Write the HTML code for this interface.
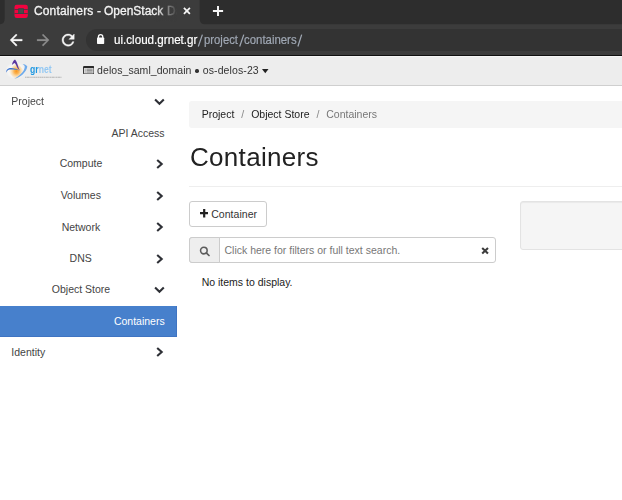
<!DOCTYPE html>
<html>
<head>
<meta charset="utf-8">
<title>Containers - OpenStack Dashboard</title>
<style>
html,body{margin:0;padding:0;}
body{width:622px;height:500px;overflow:hidden;background:#fff;font-family:"Liberation Sans",sans-serif;position:relative;color:#333;}
.abs{position:absolute;}
/* browser chrome */
#toolbar{left:0;top:24px;width:622px;height:31px;background:#3c3c3c;}
#tbline{left:0;top:55px;width:622px;height:1px;background:#101010;}
#omni{left:86px;top:28.500px;width:560px;height:22.500px;border-radius:12px;background:#333;}
.t{position:absolute;white-space:nowrap;line-height:1;}
.u{top:33.600px;font-size:12.600px;transform-origin:0 50%;}
.tt{will-change:transform;top:5px;font-size:12px;color:#f4f4f4;-webkit-text-stroke:.3px #f4f4f4;}
/* page */
#topbar{left:0;top:56px;width:622px;height:29px;background:#ededed;border-bottom:1px solid #cfcfcf;}
#sidebar{left:0;top:86px;width:177px;height:414px;background:#fff;}
.nav{font-size:10.5px;color:#444;}
.ch{position:absolute;}
#active{left:0;top:306px;width:176px;height:30px;background:#4780cc;border-right:1px solid #3f74c2;border-bottom:1px solid #3f74c2;}
#crumb{left:189px;top:101px;width:440px;height:27px;background:#f5f5f5;border-radius:3px;}
#hr{left:189px;top:186px;width:440px;height:1px;background:#eee;}
#btn{left:189px;top:201px;width:76px;height:24px;border:1px solid #ccc;border-radius:3px;background:#fff;}
#well{left:520px;top:201px;width:120px;height:46.600px;box-shadow:inset 0 1px 1px rgba(0,0,0,.05);border:1px solid #e3e3e3;border-radius:3px;background:#f5f5f5;}
#search{left:189px;top:237px;width:304.500px;height:24px;border:1px solid #ccc;border-radius:3px;background:#fff;}
#addon{left:189px;top:237px;width:29px;height:24px;border:1px solid #ccc;border-radius:3px 0 0 3px;background:#eee;}
</style>
</head>
<body>

<!-- browser chrome -->
<div id="toolbar" class="abs"></div>
<svg class="abs" style="left:0;top:0" width="622" height="26" viewBox="0 0 622 26"><rect x="0" y="0" width="622" height="26" fill="#3c3c3c"/><path d="M0 0 H4.700 V18.800 Q4.700 24.300 -0.700 24.300 H0 Z" fill="#2d2d2d"/><path d="M199.700 0 V18.800 Q199.700 24.300 205.100 24.300 H622 V0 Z" fill="#2d2d2d"/></svg>
<div id="tbline" class="abs"></div>
<div id="omni" class="abs"></div>
<!-- favicon -->
<svg class="abs" style="left:13px;top:3px" width="17" height="17" viewBox="0 0 17 17">
<rect x="1.100" y="1.400" width="14.100" height="14" rx="2.600" fill="#2c4a48" opacity=".75"/>
<rect x="1.500" y="1.800" width="13.300" height="13.200" rx="2.200" fill="#f3033f"/>
<rect x="1.500" y="6.100" width="13.300" height=".75" fill="#3a3a40"/>
<rect x="1.500" y="10.150" width="13.300" height=".75" fill="#3a3a40"/>
<rect x="5.200" y="5.300" width="5.700" height="5.700" rx=".3" fill="#2c4a48"/>
<rect x="6.100" y="6.200" width="3.900" height="3.900" fill="#4b4b4b"/>
</svg>
<div class="t tt" style="left:34.200px;letter-spacing:.14px;">Containers</div>
<div class="t tt" style="left:97.3px;">-</div>
<div class="t tt" style="left:103.7px;">OpenStack</div>
<div class="t tt" style="left:166.500px;width:11.500px;overflow:hidden;">Da</div>
<div class="abs" style="left:154px;top:2px;width:25px;height:20px;background:linear-gradient(90deg,rgba(60,60,60,0),rgba(60,60,60,.13) 24%,rgba(60,60,60,.57) 54%,rgba(60,60,60,.82) 78%,#3c3c3c 92%);"></div>
<svg class="abs" style="left:181.750px;top:6.350px" width="10" height="10" viewBox="0 0 10 10"><path d="M1.900 1.900 L7.900 7.900 M7.900 1.900 L1.900 7.900" stroke="#f6f6f6" stroke-width="1.750" fill="none"/></svg>
<svg class="abs" style="left:212px;top:5.300px" width="12" height="12" viewBox="0 0 12 12"><path d="M6 0.900 V11.100 M0.900 6 H11.100" stroke="#f6f6f6" stroke-width="1.950" fill="none"/></svg>
<!-- nav buttons -->
<svg class="abs" style="left:6.930px;top:30.600px" width="18.240" height="18.240" viewBox="0 0 24 24"><path d="M20 11H7.830l5.590-5.590L12 4l-8 8 8 8 1.410-1.410L7.830 13H20v-2z" fill="#f6f6f6" stroke="#f6f6f6" stroke-width=".5"/></svg>
<svg class="abs" style="left:33.700px;top:30.600px" width="18.240" height="18.240" viewBox="0 0 24 24"><path d="M12 4l-1.410 1.410L16.170 11H4v2h12.170l-5.580 5.590L12 20l8-8z" fill="#8c8c8c" stroke="#8c8c8c" stroke-width=".3"/></svg>
<svg class="abs" style="left:59.080px;top:30.880px" width="18.240" height="18.240" viewBox="0 0 24 24"><path d="M17.650 6.350C16.200 4.900 14.210 4 12 4c-4.420 0-7.990 3.580-7.990 8s3.570 8 7.990 8c3.730 0 6.840-2.550 7.730-6h-2.080c-.82 2.330-3.040 4-5.650 4-3.310 0-6-2.690-6-6s2.690-6 6-6c1.660 0 3.140.69 4.220 1.780L13 11h7V4l-2.350 2.350z" fill="#f6f6f6" stroke="#f6f6f6" stroke-width=".5"/></svg>
<!-- lock -->
<svg class="abs" style="left:96px;top:33px" width="10" height="12" viewBox="0 0 10 12"><rect x="1" y="4.500" width="7.200" height="6.500" rx="0.700" fill="#fbfbfb"/><path d="M2.450 5 V3.800 A2.150 2.150 0 0 1 6.750 3.800 V5" stroke="#fbfbfb" stroke-width="1.300" fill="none"/></svg>
<div class="t u" id="url" style="left:114px;color:#fff;-webkit-text-stroke:.2px #fff;transform:scaleX(0.9235);">ui.cloud.grnet.gr</div>
<div class="t u" style="left:203.800px;color:#9fa7b3;-webkit-text-stroke:.2px #9fa7b3;transform:scaleX(0.8992);">project</div>
<div class="t u" style="left:244.100px;color:#9fa7b3;-webkit-text-stroke:.2px #9fa7b3;transform:scaleX(0.9052);">containers</div>
<svg class="abs" style="left:196px;top:33px" width="110" height="15" viewBox="0 0 110 15"><path d="M2.300 13.500 L6.400 1.600 M43.700 13.500 L47.800 1.600 M101.900 13.500 L105.700 1.600" stroke="#9fa7b3" stroke-width="1.250" fill="none"/></svg>

<!-- page -->
<div id="topbar" class="abs"></div>
<div class="abs" style="left:0;top:56px;width:622px;height:1px;background:#f6f6f6;"></div>
<!-- logo -->
<svg class="abs" style="left:0;top:56px" width="70" height="29" viewBox="0 0 70 29">
<defs><radialGradient id="og" cx="50%" cy="50%" r="50%"><stop offset="0" stop-color="#f8941d"/><stop offset="0.28" stop-color="#faa635" stop-opacity=".85"/><stop offset="0.65" stop-color="#fdc97a" stop-opacity=".4"/><stop offset="1" stop-color="#ffffff" stop-opacity="0"/></radialGradient>
<radialGradient id="wg" cx="50%" cy="50%" r="50%"><stop offset="0" stop-color="#fff" stop-opacity=".9"/><stop offset="0.7" stop-color="#fff" stop-opacity=".5"/><stop offset="1" stop-color="#fff" stop-opacity="0"/></radialGradient></defs>
<ellipse cx="15.500" cy="14.500" rx="10.500" ry="9" fill="url(#wg)"/>
<path d="M16.500 7.400 L23.600 15.200 L16 23 L9.200 15.600 Z" fill="url(#og)" transform="translate(16.500 15.400) scale(1.180) translate(-16.500 -15.400)"/>
<path d="M11.900 9 C12.400 6.300 13.600 4.300 15 3.600 C16.400 5 17.300 7.500 17.900 9.500 C18.300 11 19 12.800 19.800 14.400 C18 13 17 11.500 16.400 9.800 C15.900 8.600 15.400 7.600 14.800 6.900 C13.800 7.200 12.800 7.900 11.900 9 Z" fill="#5a36a0"/>
<path d="M6.200 16.800 C5.900 14.500 7 13 9 12.300 C12 11.500 16 12.500 19.800 14.400 C16 13.800 12.500 13.300 10 13.600 C8 13.900 6.800 14.900 6.200 16.800 Z" fill="#3b74d0"/>
<path d="M22.700 8 C24.600 8.200 26.300 9.100 27.300 10.600 C26.800 13.600 25.200 16.200 22.700 18.500 C20.200 20.700 17 22.200 14.300 22.800 C17.300 21 20 19 22.200 16.500 C24.300 14 24.900 11.700 24.700 10 C24.200 9.200 23.600 8.500 22.700 8 Z" fill="#6eaaec"/>
<text x="30" y="16.800" font-family="Liberation Sans, sans-serif" font-size="11.600" font-weight="bold" fill="#1f98e2" textLength="21.600" lengthAdjust="spacingAndGlyphs">gr<tspan fill="#93c8f3">net</tspan></text>
<path d="M25 21.300 H61.500" stroke="#b4b4b4" stroke-width="1.100" stroke-dasharray="1.600 .400 2.300 .300 1.200 .400"/>
</svg>
<!-- context picker -->
<svg class="abs" style="left:82.700px;top:65.700px" width="11.400" height="8.200" viewBox="0 0 11.400 8.200"><rect x="0" y="0" width="11.400" height="8.200" rx="1.200" fill="#2a2a2a"/><rect x="0.900" y="1.900" width="9.600" height="5.500" rx=".3" fill="#dedede"/><path d="M3.600 3.200 H9.600 M3.600 4.650 H9.600 M3.600 6.100 H9.600" stroke="#777" stroke-width=".8"/><path d="M1.800 3.200 H2.800 M1.800 4.650 H2.800 M1.800 6.100 H2.800" stroke="#999" stroke-width=".8"/></svg>
<div class="t" id="ctx" style="left:97.100px;top:64.900px;font-size:10.500px;color:#333;letter-spacing:.06px;">delos_saml_domain</div>
<div class="abs" style="left:195.300px;top:69.300px;width:3.300px;height:3.300px;border-radius:50%;background:#333;"></div>
<div class="t" id="ctx2" style="left:202.800px;top:64.900px;font-size:10.500px;color:#333;letter-spacing:.1px;">os-delos-23</div>
<svg class="abs" style="left:262px;top:69px" width="7" height="5" viewBox="0 0 7 5"><path d="M0 0 H6.500 L3.250 4.200 Z" fill="#222"/></svg>

<div id="sidebar" class="abs"></div>
<div id="active" class="abs"></div>
<div class="t nav" style="left:11.3px;top:96px;">Project</div>
<div class="t nav" style="right:457.400px;top:128px;">API Access</div>
<div class="t nav" style="left:59.700px;top:158px;">Compute</div>
<div class="t nav" style="left:60.700px;top:189.900px;">Volumes</div>
<div class="t nav" style="left:61.700px;top:222px;">Network</div>
<div class="t nav" style="left:69.600px;top:252.900px;">DNS</div>
<div class="t nav" style="left:51.800px;top:284.200px;">Object Store</div>
<div class="t nav" style="right:457.300px;top:316.300px;color:#fff;">Containers</div>
<div class="t nav" style="left:11.300px;top:347.300px;">Identity</div>
<svg class="ch" style="left:153.700px;top:98px" width="11" height="8" viewBox="0 0 11 8"><path d="M1.100 1.500 L5.450 5.750 L9.800 1.500" stroke="#2e3036" stroke-width="2.100" fill="none" stroke-linejoin="miter"/></svg>
<svg class="ch" style="left:155.850px;top:158.700px" width="8" height="10" viewBox="0 0 8 10"><path d="M1.200 1 L5.700 5 L1.200 9" stroke="#2e3036" stroke-width="2.100" fill="none" stroke-linejoin="miter"/></svg>
<svg class="ch" style="left:155.850px;top:190.700px" width="8" height="10" viewBox="0 0 8 10"><path d="M1.200 1 L5.700 5 L1.200 9" stroke="#2e3036" stroke-width="2.100" fill="none" stroke-linejoin="miter"/></svg>
<svg class="ch" style="left:155.850px;top:222.200px" width="8" height="10" viewBox="0 0 8 10"><path d="M1.200 1 L5.700 5 L1.200 9" stroke="#2e3036" stroke-width="2.100" fill="none" stroke-linejoin="miter"/></svg>
<svg class="ch" style="left:155.850px;top:253.700px" width="8" height="10" viewBox="0 0 8 10"><path d="M1.200 1 L5.700 5 L1.200 9" stroke="#2e3036" stroke-width="2.100" fill="none" stroke-linejoin="miter"/></svg>
<svg class="ch" style="left:155.850px;top:347.200px" width="8" height="10" viewBox="0 0 8 10"><path d="M1.200 1 L5.700 5 L1.200 9" stroke="#2e3036" stroke-width="2.100" fill="none" stroke-linejoin="miter"/></svg>
<svg class="ch" style="left:153.700px;top:286.2px" width="11" height="8" viewBox="0 0 11 8"><path d="M1.100 1.500 L5.450 5.750 L9.800 1.500" stroke="#2e3036" stroke-width="2.100" fill="none" stroke-linejoin="miter"/></svg>

<div id="crumb" class="abs"></div>
<div class="t" id="bc" style="left:201.700px;top:109.200px;font-size:10.500px;color:#222;">Project <span style="color:#888;padding:0 4px">/</span> Object Store <span style="color:#888;padding:0 4px">/</span> <span style="color:#777">Containers</span></div>
<div class="t" id="h1" style="left:189.900px;top:144px;font-size:26px;color:#222;letter-spacing:.33px;">Containers</div>
<div id="hr" class="abs"></div>
<div id="btn" class="abs"></div>
<svg class="abs" style="left:199.800px;top:209.200px" width="8.400" height="8.400" viewBox="0 0 8.400 8.400"><path d="M4.200 0 V8.400 M0 4.200 H8.400" stroke="#222" stroke-width="2.200" fill="none"/></svg>
<div class="t" id="btnt" style="left:211.200px;top:208.800px;font-size:10.500px;color:#333;letter-spacing:.05px;">Container</div>
<div id="well" class="abs"></div>
<div id="search" class="abs"></div>
<div id="addon" class="abs"></div>
<svg class="abs" style="left:199px;top:245.800px" width="12" height="11" viewBox="0 0 12 11"><circle cx="4.850" cy="4.550" r="3.300" stroke="#5c5c5c" stroke-width="1.550" fill="none"/><path d="M7.300 6.900 L10 9.500" stroke="#5c5c5c" stroke-width="1.700" fill="none" stroke-linecap="round"/></svg>
<div class="t" id="ph" style="left:224.500px;top:245.200px;font-size:10.500px;color:#777;">Click here for filters or full text search.</div>
<svg class="abs" style="left:481.150px;top:246.900px" width="8.200" height="8" viewBox="0 0 8.200 8"><path d="M1.200 1.100 L7 6.500 M7 1.100 L1.200 6.500" stroke="#3c3c3c" stroke-width="2.100" fill="none"/></svg>
<div class="t" id="noitems" style="left:201.700px;top:277.300px;font-size:10.500px;color:#222;">No items to display.</div>
</body>
</html>
